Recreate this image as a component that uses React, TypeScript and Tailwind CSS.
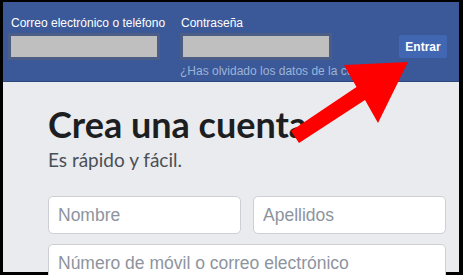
const Arrow = () => (
  <svg
    className="absolute left-0 top-0 pointer-events-none"
    width="463"
    height="275"
    viewBox="0 0 463 275"
  >
    <polygon
      points="291,131 356.5,87 344,65 408,62 378,123 365,100 299,143"
      fill="#ff0000"
    />
  </svg>
);

const HeadInput = () => (
  <div className="h-[27px] w-[152px] border-[3px] border-[#4d5e86] bg-[#bfbfbf]" />
);

const field =
  "h-[38px] rounded-[5px] border border-[#ccd0d5] bg-white pl-[9px] pr-[10px] text-[#1c1e21] outline-none placeholder:text-[#8d949e]";

export default function App() {
  return (
    <div className="relative h-[275px] w-[463px] overflow-hidden bg-black pb-[3px] pl-[3px] pr-[4px] pt-[2px]">
      <div className="flex h-full flex-col bg-[#e9ebee]">
        {/* top bar */}
        <div className="flex h-[80px] shrink-0 border-b border-[#29487d] bg-[#3b5998] pl-[5px] pr-[12px] font-['Liberation_Sans',Arial,sans-serif] text-[12px]">
          <div className="flex w-[152px] flex-col pt-[13px]">
            <label className="ml-[3px] whitespace-nowrap leading-[16px] text-white">Correo electrónico o teléfono</label>
            <div className="mt-[2px]">
              <HeadInput />
            </div>
          </div>
          <div className="ml-[20px] flex w-[152px] flex-col pt-[13px]">
            <label className="ml-[1px] leading-[16px] text-white">Contraseña</label>
            <div className="mt-[2px]">
              <HeadInput />
            </div>
            <a className="mt-[3px] whitespace-nowrap leading-[16px] text-[#9cb4d8]">
              ¿Has olvidado los datos de la cuenta?
            </a>
          </div>
          <div className="ml-auto pt-[33px]">
            <button className="h-[23px] w-[48px] rounded-[2px] border border-[#4267b2] bg-[#4267b2] text-[12px] font-bold leading-[20px] text-white">
              Entrar
            </button>
          </div>
        </div>

        {/* body */}
        <div className="px-[45px] pt-[20px] font-['Lato',sans-serif]">
          <h1 className="text-[36px] font-bold leading-[44px] text-[#1c1e21]">Crea una cuenta</h1>
          <p className="mt-[2px] text-[19px] leading-[24px] text-[#4b4f56]">Es rápido y fácil.</p>
          <div className="mt-[24px] grid w-[398px] grid-cols-2 gap-x-[12px] gap-y-[10px] font-['Liberation_Sans',Arial,sans-serif] text-[17.5px]">
            <input className={field} placeholder="Nombre" />
            <input className={field} placeholder="Apellidos" />
            <input className={`col-span-2 ${field}`} placeholder="Número de móvil o correo electrónico" />
          </div>
        </div>
      </div>
      <Arrow />
    </div>
  );
}
